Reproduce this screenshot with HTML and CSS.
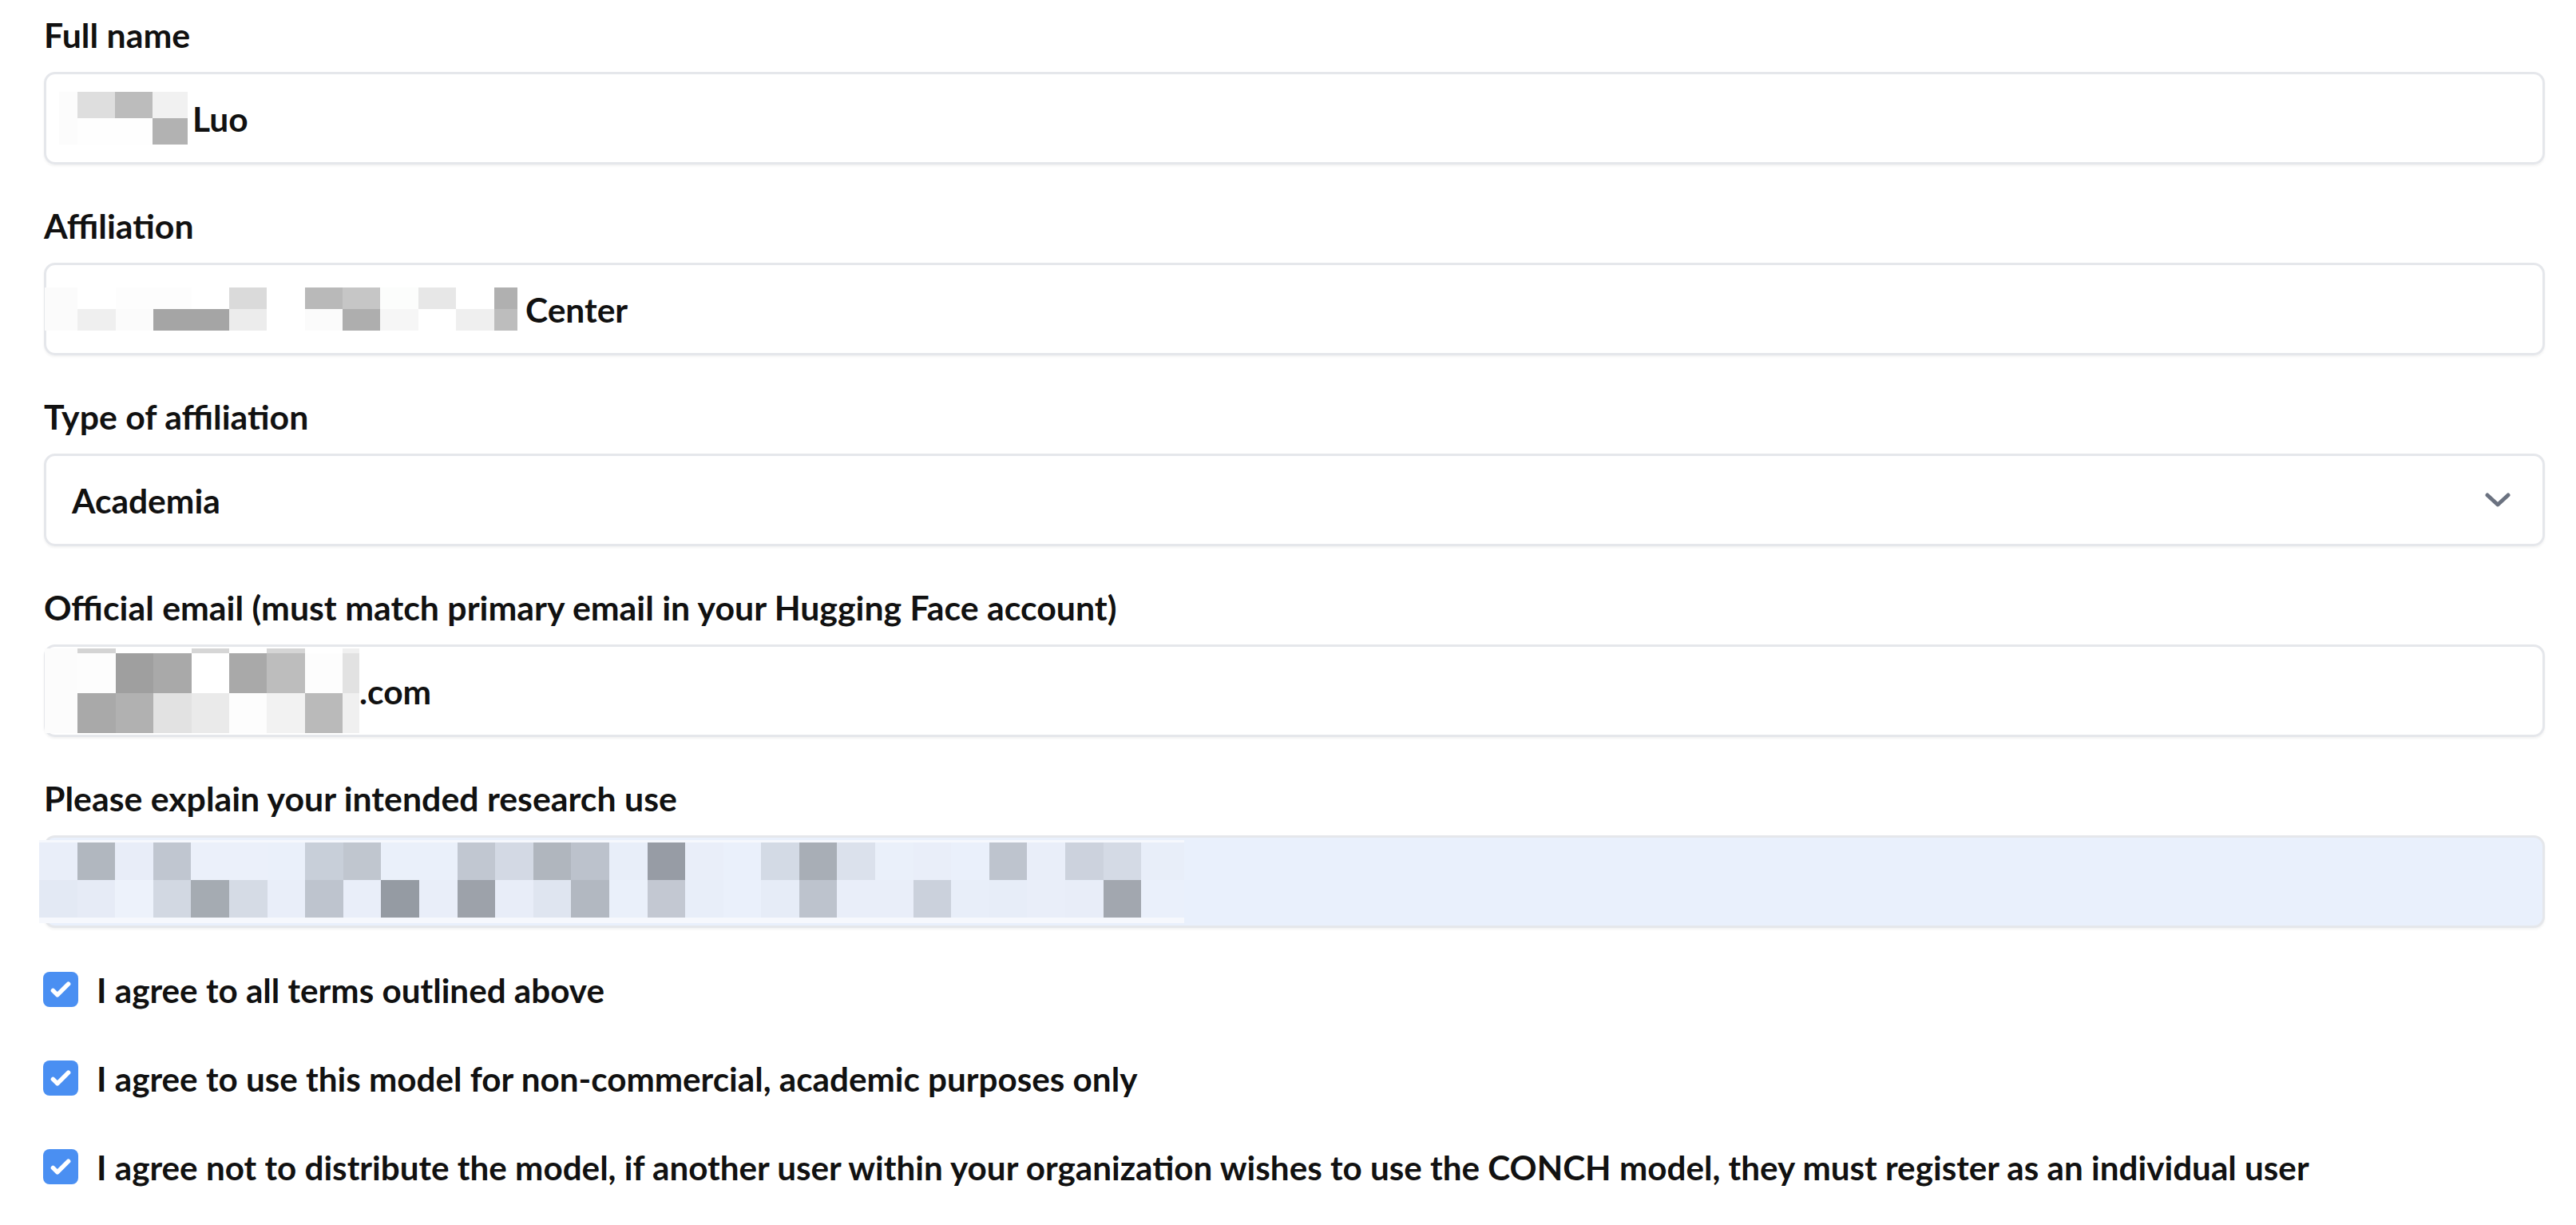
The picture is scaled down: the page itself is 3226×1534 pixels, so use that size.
FILE: index.html
```html
<!DOCTYPE html>
<html lang="en">
<head>
    <meta charset="UTF-8">
    <meta name="viewport" content="width=device-width, initial-scale=1.0">
    <title>Access request form</title>
    <link rel="stylesheet" href="styles.css">
</head>
<body>
    <form class="gate-form">
        <div class="field">
            <label class="field-label">Full name</label>
            <div class="field-box">
                <div class="mosaic mosaic-name" data-pixels="
                    fcfcfc dedede bcbcbc f1f1f1
                    fcfcfc fefefe fefefe b2b2b2"></div>
                <span class="value value-name">Luo</span>
            </div>
        </div>

        <div class="field">
            <label class="field-label">Affiliation</label>
            <div class="field-box">
                <div class="mosaic mosaic-affiliation" data-pixels="
                    fbfbfb ffffff fdfdfd fdfdfd ffffff dadada ffffff b9b9b9 c6c6c6 fcfdfc e7e7e7 ffffff b0b0b0
                    fbfbfb efefef fbfbfb a5a5a5 a5a5a5 ececec ffffff fbfbfb aeaeae f6f6f6 ffffff efefef bdbdbd"></div>
                <span class="value value-center">Center</span>
            </div>
        </div>

        <div class="field">
            <label class="field-label">Type of affiliation</label>
            <div class="field-box select-box">
                <span class="value">Academia</span>
                <svg class="chevron" width="32" height="18" viewBox="0 0 32 18">
                    <polyline points="3,3 16,15 29,3" fill="none" stroke="#6b7280" stroke-width="5" stroke-linecap="round" stroke-linejoin="round"/>
                </svg>
            </div>
        </div>

        <div class="field">
            <label class="field-label">Official email (must match primary email in your Hugging Face account)</label>
            <div class="field-box">
                <div class="mosaic mosaic-email" data-pixels="
                    fcfcfc d4d4d4 ffffff ffffff d6d6d6 ffffff d5d5d5 ffffff f0f0f0
                    fcfcfc fdfdfd 9f9f9f a9a9a9 ffffff a9a9a9 bdbdbd fdfdfd e2e2e2
                    fcfcfc a9a9a9 b1b1b1 e2e2e2 eaeaea fdfdfd f2f2f2 bababa f0f0f0"></div>
                <span class="value">.com</span>
            </div>
        </div>

        <div class="field">
            <label class="field-label">Please explain your intended research use</label>
            <div class="field-box autofill">
                <div class="mosaic mosaic-research" data-pixels="
                    e9eef9 b1b7bf e8edf8 c0c6d0 ebf0fa ebf0fa eaf0fa c8cfd9 c0c6cf eaf0fa eaf0fa c1c7d1 d3d9e4 b0b6be bcc2cc e8eef9 979ca5 e9eef9 eaf0fb d3dae5 a8aeb6 dbe1ec eaf0fa e9eef9 eaf0fb bec4ce e9eef9 ccd2dd d4dae5 e8eef9
                    e3e9f4 e6ebf6 edf2fb d2d8e2 a5abb2 d5dbe5 e9eef9 bec4ce e9eef9 959ba3 e9eef9 9da2aa e8edf8 dfe5f0 b2b8c1 eaf0fa c3c8d2 e8eef9 eaf0fb e6ecf7 bdc3cd e9eef9 e9eef9 cbd1dc e8eef9 e7edf8 e9eef9 e8edf8 a2a7af eaf0fb"></div>
            </div>
        </div>

        <div class="agree">
            <span class="tick">
                <svg width="44" height="44" viewBox="0 0 16 16"><path fill="#fff" d="M12.207 4.793a1 1 0 010 1.414l-5 5a1 1 0 01-1.414 0l-2-2a1 1 0 011.414-1.414L6.5 9.086l4.293-4.293a1 1 0 011.414 0z"/></svg>
            </span>
            <span>I agree to all terms outlined above</span>
        </div>
        <div class="agree">
            <span class="tick">
                <svg width="44" height="44" viewBox="0 0 16 16"><path fill="#fff" d="M12.207 4.793a1 1 0 010 1.414l-5 5a1 1 0 01-1.414 0l-2-2a1 1 0 011.414-1.414L6.5 9.086l4.293-4.293a1 1 0 011.414 0z"/></svg>
            </span>
            <span>I agree to use this model for non-commercial, academic purposes only</span>
        </div>
        <div class="agree">
            <span class="tick">
                <svg width="44" height="44" viewBox="0 0 16 16"><path fill="#fff" d="M12.207 4.793a1 1 0 010 1.414l-5 5a1 1 0 01-1.414 0l-2-2a1 1 0 011.414-1.414L6.5 9.086l4.293-4.293a1 1 0 011.414 0z"/></svg>
            </span>
            <span>I agree not to distribute the model, if another user within your organization wishes to use the CONCH model, they must register as an individual user</span>
        </div>
    </form>

    <script>
        // Blurred (pixelated) parts of the values: one cell per colour
        document.querySelectorAll('.mosaic').forEach(mosaic => {
            mosaic.dataset.pixels.trim().split(/\s+/).forEach(hex => {
                const cell = document.createElement('span');
                cell.style.background = '#' + hex;
                mosaic.appendChild(cell);
            });
        });
    </script>
</body>
</html>
```

FILE: styles.css
```css
body {
    margin: 0;
    background: #fff;
    color: #111;
    font-family: Lato, "Noto Sans", sans-serif;
}

.gate-form {
    width: 3132px;
    margin-left: 55px;
    padding-top: 14px;
}

/* Champs */
.field {
    margin-bottom: 47px;
}

.field-label {
    display: block;
    font-size: 42.8px;
    font-weight: 700;
    line-height: 60px;
    margin-bottom: 16px;
}

.field-box {
    box-sizing: border-box;
    height: 116px;
    border: 3px solid #e5e7eb;
    border-radius: 14px;
    box-shadow: 0 2px 3px rgba(0, 0, 0, 0.05);
    display: flex;
    align-items: center;
    padding: 0 40px 0 32px;
    font-size: 42.5px;
    font-weight: 700;
}

.field-box.autofill {
    background: #e9f0fc;
}

.value-name {
    margin-left: 6px;
}

.value-center {
    margin-left: 10px;
}

.chevron {
    margin-left: auto;
}

/* Mosaïques */
.mosaic {
    display: grid;
    flex-shrink: 0;
}

.mosaic-name {
    grid-template-columns: 23px 47px 47px 44px;
    grid-template-rows: 33px 33px;
    margin-left: -16px;
}

.mosaic-affiliation {
    grid-template-columns: 41px 48px 47px 48px 47px 47px 48px 47px 47px 48px 47px 48px 29px;
    grid-template-rows: 27px 27px;
    margin-left: -34px;
}

.mosaic-email {
    grid-template-columns: 41px 48px 47px 48px 47px 47px 48px 47px 21px;
    grid-template-rows: 6px 50px 50px;
    margin-left: -34px;
}

.mosaic-research {
    grid-template-columns: repeat(29, 47.6px) 54px;
    grid-template-rows: 47px 47px;
    padding: 3px 0 7px;
    background: #f6f8fd;
    margin-left: -41px;
}

/* Cases à cocher */
.agree {
    display: flex;
    align-items: center;
    height: 60px;
    margin-bottom: 51px;
    font-size: 42.2px;
    font-weight: 700;
}

.tick {
    width: 44px;
    height: 44px;
    border-radius: 8px;
    background: #4a8ff2;
    margin-left: -1px;
    margin-right: 23px;
    flex-shrink: 0;
    display: flex;
}
```
